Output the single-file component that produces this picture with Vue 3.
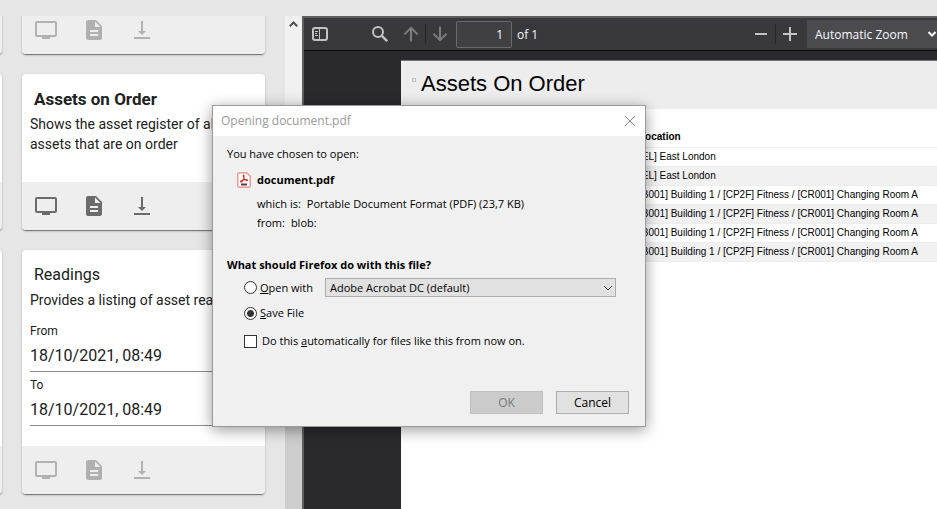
<script setup>
import { ref } from 'vue'

const cards = [
  { id: 'blank-1' },
  { id: 'previous', disabled: true },
  { id: 'blank-2', body: true },
  {
    id: 'on-order',
    body: true,
    title: 'Assets on Order',
    text: 'Shows the asset register of all assets that are on order',
    active: true,
  },
  { id: 'blank-3', body: true },
  {
    id: 'readings',
    body: true,
    title: 'Readings',
    text: 'Provides a listing of asset readings',
    fields: [
      { id: 'from', label: 'From', value: '18/10/2021, 08:49' },
      { id: 'to', label: 'To', value: '18/10/2021, 08:49' },
    ],
    disabled: true,
  },
]

const actions = [
  {
    name: 'View',
    path: 'M21 3H3c-1.1 0-2 .9-2 2v12c0 1.1.9 2 2 2h5v2h8v-2h5c1.1 0 1.99-.9 1.99-2L23 5c0-1.1-.9-2-2-2zm0 14H3V5h18v12z',
  },
  {
    name: 'Document',
    path: 'M14 2H6c-1.1 0-1.99.9-1.99 2L4 20c0 1.1.89 2 1.99 2H18c1.1 0 2-.9 2-2V8l-6-6zm2 16H8v-2h8v2zm0-4H8v-2h8v2zm-3-5V3.5L18.5 9H13z',
  },
  {
    name: 'Download',
    path: 'M16 13h-3V3h-2v10H8l4 4 4-4zM4 19v2h16v-2H4z',
  },
]

const rows = [
  '[EL] East London',
  '[EL] East London',
  '[B001] Building 1 / [CP2F] Fitness / [CR001] Changing Room A',
  '[B001] Building 1 / [CP2F] Fitness / [CR001] Changing Room A',
  '[B001] Building 1 / [CP2F] Fitness / [CR001] Changing Room A',
  '[B001] Building 1 / [CP2F] Fitness / [CR001] Changing Room A',
]

const choice = ref('save')
const always = ref(false)
</script>

<template>
  <div class="screen">
    <main class="layout">
      <section class="reports">
        <div class="cards">
          <article v-for="card in cards" :key="card.id" class="card">
            <div v-if="card.body" class="card-body">
              <h2 v-if="card.title" class="card-title" :class="{ active: card.active }">{{ card.title }}</h2>
              <p v-if="card.text" class="card-text">{{ card.text }}</p>
              <div v-for="field in card.fields" :key="field.id" class="field">
                <label :for="field.id">{{ field.label }}</label>
                <input :id="field.id" type="text" :value="field.value" />
              </div>
            </div>
            <footer class="card-actions">
              <button
                v-for="action in actions"
                :key="action.name"
                type="button"
                :disabled="card.disabled"
                :aria-label="action.name"
              >
                <svg viewBox="0 0 24 24" width="24" height="24"><path :d="action.path" fill="currentColor" /></svg>
              </button>
            </footer>
          </article>
        </div>
      </section>

      <div class="scrollbar">
        <svg viewBox="0 0 17 17" width="17" height="17">
          <path d="M4.8 10.3 8.5 6.5l3.7 3.8" fill="none" stroke="#505050" stroke-width="2" />
        </svg>
        <div class="thumb" />
      </div>

      <section class="viewer">
        <div class="toolbar">
          <button type="button" class="tool" aria-label="Toggle sidebar">
            <svg viewBox="0 0 16 16" width="16" height="16" fill="none" stroke="currentColor">
              <rect x="1" y="2" width="14" height="12" rx="2" stroke-width="2" />
              <path d="M7.5 2v12" />
              <path d="M3 5.5h3M3 7.5h2M3 9.5h3" />
            </svg>
          </button>
          <button type="button" class="tool search" aria-label="Find">
            <svg viewBox="0 0 16 16" width="16" height="16" fill="none" stroke="currentColor" stroke-width="2">
              <circle cx="6" cy="6" r="5" />
              <path d="m9.6 9.6 5.6 5.6" stroke-width="2.4" />
            </svg>
          </button>
          <button type="button" class="tool" disabled aria-label="Previous page">
            <svg viewBox="0 0 16 16" width="16" height="16" fill="none" stroke="currentColor" stroke-width="2">
              <path d="M8 15.5V1.6M1.4 8.4 8 1.8l6.6 6.6" />
            </svg>
          </button>
          <span class="split" />
          <button type="button" class="tool" disabled aria-label="Next page">
            <svg viewBox="0 0 16 16" width="16" height="16" fill="none" stroke="currentColor" stroke-width="2">
              <path d="M8 .5v13.9M1.4 7.6 8 14.2l6.6-6.6" />
            </svg>
          </button>
          <input class="page-number" type="text" value="1" aria-label="Page" />
          <span class="page-total">of 1</span>
          <button type="button" class="tool zoom-out" aria-label="Zoom out">
            <svg viewBox="0 0 16 16" width="16" height="16"><path d="M2 8h12" stroke="currentColor" stroke-width="2" /></svg>
          </button>
          <span class="split" />
          <button type="button" class="tool" aria-label="Zoom in">
            <svg viewBox="0 0 16 16" width="16" height="16"><path d="M1 8h14M8 1v14" stroke="currentColor" stroke-width="2" /></svg>
          </button>
          <div class="select zoom">
            <select aria-label="Zoom">
              <option>Automatic Zoom</option>
            </select>
            <svg viewBox="0 0 10 10" width="10" height="10">
              <path d="M1.5 3 5 6.5 8.5 3" fill="none" stroke="#f9f9fa" stroke-width="2" />
            </svg>
          </div>
        </div>
        <div class="sheet">
          <header class="sheet-header">
            <span class="marker" />
            <h1>Assets On Order</h1>
          </header>
          <table>
            <thead>
              <tr>
                <td class="spacer" />
                <th>Location</th>
              </tr>
            </thead>
            <tbody>
              <tr v-for="(row, i) in rows" :key="i">
                <td class="spacer" />
                <td>{{ row }}</td>
              </tr>
            </tbody>
          </table>
        </div>
      </section>
    </main>

    <form class="dialog" role="dialog" aria-labelledby="dialog-title" @submit.prevent>
      <header class="dialog-header">
        <span id="dialog-title">Opening document.pdf</span>
        <button type="button" aria-label="Close">
          <svg viewBox="0 0 12 12" width="12" height="12">
            <path d="m1 1 10 10M11 1 1 11" stroke="#8a8a8a" stroke-width="1" />
          </svg>
        </button>
      </header>
      <div class="dialog-body">
        <p>You have chosen to open:</p>
        <div class="file">
          <svg viewBox="0 0 14 16" width="14" height="16">
            <path d="M2 .8h7.6L13.2 4.300V14a1.2 1.2 0 0 1-1.2 1.2H2A1.2 1.2 0 0 1 .8 14V2A1.2 1.2 0 0 1 2 .8z" fill="#fff" stroke="#f0837c" stroke-width="1.2" />
            <path d="M6.6 3c.8 0 .6 2.2.1 3.7C6.100 8.300 4.800 10 3.900 10c-1.100-.4.5-1.800 2.600-2.200 2.200-.5 4.200-.4 4.200.4-.2 1-2.400 0-3.400-1.500C6.500 5.500 5.900 3.200 6.600 3z" fill="none" stroke="#e5322d" stroke-width="1.1" />
            <path d="M4 12.500h6" stroke="#444" stroke-width="2" />
          </svg>
          <strong>document.pdf</strong>
        </div>
        <dl class="details">
          <div><dt>which is:</dt><dd>Portable Document Format (PDF) (23,7 KB)</dd></div>
          <div><dt>from:</dt><dd>blob:</dd></div>
        </dl>
        <h3>What should Firefox do with this file?</h3>
        <div class="option">
          <input id="open-with" v-model="choice" type="radio" name="choice" value="open" />
          <label for="open-with"><u>O</u>pen with</label>
          <div class="select app">
            <select aria-label="Application">
              <option>Adobe Acrobat DC (default)</option>
            </select>
            <svg viewBox="0 0 10 10" width="10" height="10">
              <path d="m1 3 4 4 4-4" fill="none" stroke="#555" stroke-width="1" />
            </svg>
          </div>
        </div>
        <div class="option save">
          <input id="save-file" v-model="choice" type="radio" name="choice" value="save" />
          <label for="save-file"><u>S</u>ave File</label>
        </div>
        <div class="option always">
          <input id="always" v-model="always" type="checkbox" />
          <label for="always">Do this <u>a</u>utomatically for files like this from now on.</label>
        </div>
        <div class="buttons">
          <button type="submit" disabled>OK</button>
          <button type="button">Cancel</button>
        </div>
      </div>
    </form>
  </div>
</template>

<style>
body {
  margin: 0;
  background: #e6e6e6;
}
</style>

<style scoped>
* {
  box-sizing: border-box;
}

h1,
h2,
h3,
p,
dl,
dd {
  margin: 0;
}

button,
input,
select {
  font: inherit;
  color: inherit;
  padding: 0;
  margin: 0;
}

svg {
  display: block;
}

.screen {
  position: relative;
  height: 100vh;
  overflow: hidden;
  padding-top: 16px;
  background: #e6e6e6;
}

.layout {
  display: flex;
  height: 100%;
}

/* report cards */
.reports {
  width: 285px;
  flex: none;
  overflow: hidden;
  font-family: Roboto, sans-serif;
  color: #212121;
}

.cards {
  display: grid;
  grid-template-columns: 243px 243px;
  justify-content: end;
  gap: 20px;
  margin-top: -10px;
  padding-right: 20px;
}

.card {
  display: flex;
  flex-direction: column;
  background: #fff;
  border-radius: 4px;
  overflow: hidden;
  box-shadow: 0 2px 1px -1px rgba(0, 0, 0, 0.3), 0 1px 1px rgba(0, 0, 0, 0.2), 0 1px 3px rgba(0, 0, 0, 0.16);
}

.card-body {
  flex: 1;
  min-height: 108px;
  padding: 13px 8px 20px;
}

.card-title {
  padding-left: 4px;
  margin-bottom: 3px;
  font-size: 16px;
  line-height: 24px;
  font-weight: 400;
}

.card-title.active {
  font-size: 17px;
  font-weight: 700;
}

.card-text {
  font-size: 14px;
  line-height: 20px;
}

.field {
  display: flex;
  flex-direction: column;
  margin-top: 5px;
}

.card-text + .field {
  margin-top: 13px;
}

.field label {
  font-size: 12px;
  line-height: 16px;
}

.field input {
  width: 100%;
  height: 33px;
  border: none;
  border-bottom: 1px solid #8c8c8c;
  background: transparent;
  font-size: 16px;
}

.card-actions {
  display: flex;
  height: 48px;
  background: #eee;
  color: #6b6b6b;
}

.card-actions button {
  width: 48px;
  display: grid;
  place-items: center;
  border: none;
  background: transparent;
}

.card-actions button:disabled {
  color: #b1b1b1;
}

.scrollbar {
  width: 17px;
  flex: none;
  display: flex;
  flex-direction: column;
  background: #f0f0f0;
}

.thumb {
  flex: 1;
  margin-top: 200px;
  background: #cdcdcd;
}

/* pdf viewer */
.viewer {
  flex: 1;
  min-width: 0;
  overflow: hidden;
  display: flex;
  flex-direction: column;
  border-top: 2px solid #5f5f5f;
  border-left: 2px solid #5f5f5f;
  background: #2a2a2e;
}

.toolbar {
  display: flex;
  align-items: center;
  height: 33px;
  padding-left: 4px;
  border-bottom: 1px solid #0c0c0d;
  background: #38383d;
  color: #f9f9fa;
  font: 12px 'Open Sans', sans-serif;
}

.tool {
  width: 24px;
  height: 28px;
  flex: none;
  display: grid;
  place-items: center;
  border: none;
  background: transparent;
  color: #c3c3c5;
}

.tool:disabled {
  color: #7d7d80;
}

.search {
  margin-left: 36px;
  margin-right: 7px;
}

.split {
  width: 1px;
  height: 20px;
  margin: 0 2px;
  flex: none;
  background: #252528;
}

.page-number {
  width: 56px;
  height: 27px;
  margin-left: 4px;
  padding-right: 8px;
  border: 1px solid #6b6b6f;
  border-radius: 2px;
  background: #404044;
  text-align: right;
}

.page-total {
  margin-left: 5px;
}

.zoom-out {
  margin-left: auto;
}

.select {
  display: grid;
  align-items: center;
}

.select > * {
  grid-area: 1 / 1;
}

.select select {
  width: 100%;
  height: 100%;
  appearance: none;
  border: none;
  border-radius: 0;
  background: transparent;
}

.select svg {
  justify-self: end;
  pointer-events: none;
}

.zoom {
  width: 130px;
  height: 28px;
  margin-left: 5px;
  flex: none;
  background: #4a4a4f;
}

.zoom select {
  padding-left: 8px;
}

.sheet {
  flex: 1;
  margin: 9px 0 0 97px;
  border-top: 1px solid #777;
  background: #fff;
  color: #000;
  font-family: 'Liberation Sans', Arial, sans-serif;
}

.sheet-header {
  display: flex;
  gap: 5px;
  height: 48px;
  padding: 8px 0 0 11px;
  background: #ededed;
}

.sheet-header h1 {
  font-size: 22px;
  line-height: 30px;
  font-weight: 400;
}

.marker {
  width: 4px;
  height: 4px;
  margin-top: 9px;
  border: 1px solid #c4c4c4;
}

table {
  width: calc(100% - 20px);
  margin: 18px 0 0 20px;
  border-collapse: collapse;
  font-size: 10px;
  line-height: 18px;
  white-space: nowrap;
}

th,
td {
  padding: 0;
  height: 19px;
  text-align: left;
}

th {
  height: 20px;
}

.spacer {
  width: 218px;
}

tr {
  border-bottom: 1px solid #ededed;
}

tbody tr:nth-child(even) {
  background: #f1f1f1;
}

/* download dialog */
.dialog {
  position: absolute;
  top: 105px;
  left: 212px;
  width: 434px;
  border: 1px solid #9a9a9a;
  background: #f0f0f0;
  color: #000;
  font: 12px/18px 'Open Sans', sans-serif;
  box-shadow: 0 3px 14px rgba(0, 0, 0, 0.4);
}

.dialog-header {
  display: flex;
  align-items: center;
  justify-content: space-between;
  height: 30px;
  padding: 0 9px 0 8px;
  background: #fff;
  color: #999;
}

.dialog-header button {
  border: none;
  background: transparent;
}

.dialog-body {
  padding: 9px 16px 12px 14px;
  font-size: 11px;
}

.file {
  display: flex;
  align-items: center;
  gap: 6px;
  margin: 8px 0 5px;
  padding-left: 10px;
}

.details {
  padding-left: 30px;
}

.details div {
  display: flex;
  gap: 6px;
  line-height: 19px;
}

.dialog h3 {
  margin: 24px 0 4px;
  font-size: 11px;
  font-weight: 700;
}

.option {
  display: flex;
  align-items: center;
  gap: 3px;
  padding-left: 17px;
}

.option input {
  appearance: none;
  width: 13px;
  height: 13px;
  flex: none;
  border: 1px solid #333;
  background: #fff;
}

.option input[type='radio'] {
  border-radius: 50%;
}

.option input[type='radio']:checked {
  background: radial-gradient(circle, #333 3px, #fff 4px);
}

.save {
  margin-top: 7px;
}

.always {
  gap: 5px;
  margin-top: 10px;
}

.app {
  flex: 1;
  height: 19px;
  margin: 0 13px 0 9px;
  border: 1px solid #adadad;
  background: #e1e1e1;
}

.app select {
  padding-left: 4px;
}

.app svg {
  margin-right: 2px;
}

.buttons {
  display: flex;
  justify-content: flex-end;
  gap: 13px;
  margin-top: 41px;
  font-size: 12px;
}

.buttons button {
  width: 73px;
  height: 23px;
  border: 1px solid #adadad;
  background: #e1e1e1;
}

.buttons button:disabled {
  border-color: #bfbfbf;
  background: #ccc;
  color: #777;
}
</style>
